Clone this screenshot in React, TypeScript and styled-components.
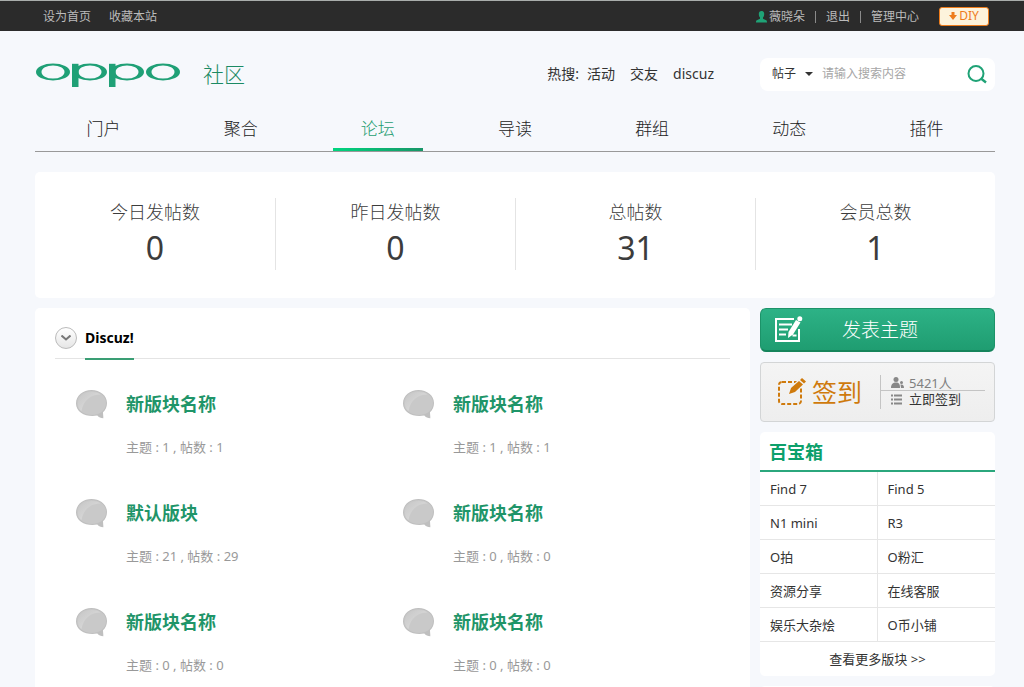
import React from 'react';
import styled, { createGlobalStyle, css } from 'styled-components';

const Global = createGlobalStyle`
  * { box-sizing: border-box; }
  body {
    margin: 0;
    background: #f6f8fc;
    color: #333;
    font: 14px/20px "Noto Sans", "Noto Sans CJK SC", sans-serif;
  }
  a { color: inherit; text-decoration: none; }
  ul, dl, dd, h1, h2, h3, p { margin: 0; padding: 0; list-style: none; }
  button, input, select { font: inherit; color: inherit; }
  button { cursor: pointer; }
`;

const gutter = css`
  padding-left: 35px;
  padding-right: 29px;
`;

const TopBar = styled.div`
  ${gutter}
  display: flex;
  justify-content: space-between;
  align-items: center;
  height: 31px;
  background: #2b2b2b;
  border-top: 1px solid #a9adab;
  color: #bbb;
  font-size: 12px;
`;
const TopLinks = styled.nav`
  display: flex;
  gap: 18px;
  padding: 2px 0 0 8px;
`;
const UserLinks = styled.div`
  display: flex;
  align-items: center;
  padding-right: 6px;
`;
const UserItems = styled.div`
  display: flex;
  align-items: center;
  padding-top: 2px;
`;
const UserName = styled.a`
  display: flex;
  align-items: center;
  gap: 2px;
`;
const Divider = styled.span`
  width: 1px;
  height: 12px;
  margin: 0 10px;
  background: #8a8a8a;
`;
const DiyButton = styled.button`
  display: flex;
  align-items: center;
  justify-content: center;
  gap: 2px;
  width: 50px;
  height: 19px;
  margin-left: 20px;
  padding: 0;
  background: #fdf3dc;
  border: 1px solid #ee7c1b;
  border-radius: 3px;
  color: #ee7c1b;
  font-size: 12px;
  line-height: 16px;
`;

const Header = styled.header`
  ${gutter}
`;
const Masthead = styled.div`
  display: flex;
  align-items: center;
  height: 86px;
`;
const Brand = styled.a`
  display: flex;
  align-items: center;
  gap: 22px;
  color: #1b8a63;
  font-size: 21px;
  font-weight: 300;
  line-height: 30px;
`;
const HotSearch = styled.div`
  display: flex;
  gap: 15px;
  margin-left: auto;
  margin-right: 46px;
`;
const HotFirst = styled.span`
  display: flex;
  gap: 8px;
`;
const SearchBox = styled.form`
  display: flex;
  align-items: center;
  width: 235px;
  height: 33px;
  padding: 0 8px 0 12px;
  background: #fff;
  border-radius: 8px;
  font-size: 12px;
`;
const ScopeWrap = styled.div`
  display: flex;
  align-items: center;
  margin-right: 9px;
`;
const Scope = styled.select`
  appearance: none;
  width: 33px;
  padding: 0;
  border: 0;
  background: transparent;
  outline: none;
`;
const SearchInput = styled.input`
  flex: 1;
  min-width: 0;
  padding: 0;
  border: 0;
  outline: none;
  background: transparent;
  &::placeholder { color: #a6a6a6; opacity: 1; }
`;
const IconButton = styled.button`
  display: flex;
  padding: 0;
  border: 0;
  background: transparent;
`;

const MainNav = styled.nav`
  display: grid;
  grid-template-columns: repeat(7, 1fr);
  height: 35px;
  border-bottom: 1px solid #999;
`;
const NavLink = styled.a<{ $active?: boolean }>`
  display: flex;
  flex-direction: column;
  align-items: center;
  justify-content: space-between;
  font-size: 17px;
  font-weight: 300;
  line-height: 24px;
  color: ${(p) => (p.$active ? '#1f9d72' : '#222')};
  ${(p) =>
    p.$active &&
    css`
      &::after {
        content: '';
        width: 90px;
        height: 3px;
        background: linear-gradient(90deg, #00d57f, #189668);
      }
    `}
`;

const Page = styled.main`
  ${gutter}
  padding-top: 20px;
`;
const Stats = styled.dl`
  display: grid;
  grid-template-columns: repeat(4, 1fr);
  height: 126px;
  padding: 26px 0 28px;
  background: #fff;
  border-radius: 5px;
`;
const Stat = styled.div`
  text-align: center;
  color: #3c3c3c;
  & + & { border-left: 1px solid #e4e4e4; }
`;
const StatLabel = styled.dt`
  font-size: 18px;
  font-weight: 300;
  line-height: 28px;
`;
const StatValue = styled.dd`
  font-size: 32px;
  line-height: 44px;
`;

const Columns = styled.div`
  display: grid;
  grid-template-columns: 1fr 235px;
  gap: 10px;
  margin-top: 10px;
`;
const Panel = styled.section`
  padding: 16px 20px 0;
  background: #fff;
  border-radius: 5px 5px 0 0;
`;
const PanelHead = styled.div`
  display: flex;
  gap: 8px;
  height: 35px;
  border-bottom: 1px solid #e4e4e4;
`;
const Toggle = styled.button`
  display: flex;
  align-items: center;
  justify-content: center;
  width: 22px;
  height: 22px;
  margin-top: 3px;
  padding: 0;
  border: 1px solid #bbb;
  border-radius: 50%;
  background: linear-gradient(#fff, #e6e6e6);
`;
const PanelTitle = styled.h2`
  height: 36px;
  border-bottom: 2px solid #3a9e74;
  color: #000;
  font-size: 14px;
  line-height: 28px;
`;
const Boards = styled.ul`
  display: grid;
  grid-template-columns: repeat(2, 1fr);
  padding: 31px 0 0 21px;
`;
const Board = styled.li`
  display: flex;
  gap: 18px;
  height: 109px;
`;
const BoardName = styled.h3`
  color: #1f9569;
  font-size: 18px;
  line-height: 28px;
`;
const BoardMeta = styled.p`
  margin-top: 19px;
  color: #999;
  font-size: 13px;
  line-height: 20px;
`;

const Sidebar = styled.aside`
  display: flex;
  flex-direction: column;
  gap: 10px;
`;
const PostButton = styled.button`
  display: flex;
  align-items: center;
  gap: 38px;
  height: 44px;
  padding: 0 13px;
  border: 1px solid #1c9369;
  border-bottom: 2px solid #15845c;
  border-radius: 6px;
  background: linear-gradient(#2db286, #1f9d71);
  color: #fff;
  font-size: 19px;
  font-weight: 300;
  line-height: 28px;
`;
const SignCard = styled.div`
  display: flex;
  align-items: center;
  height: 60px;
  padding: 0 9px 0 16px;
  border: 1px solid #d3d5d6;
  border-radius: 4px;
  background: linear-gradient(#f4f4f4, #eee);
`;
const SignTitle = styled.span`
  margin: 0 18px 0 5px;
  color: #cf7a0c;
  font-size: 25px;
  line-height: 36px;
  white-space: nowrap;
`;
const SignInfo = styled.div`
  flex: 1;
  height: 34px;
  border-left: 1px solid #c4c4c4;
  font-size: 13px;
  line-height: 16px;
`;
const SignLine = styled.div<{ $muted?: boolean }>`
  display: flex;
  align-items: center;
  gap: 5px;
  height: 16px;
  padding-left: 10px;
  color: ${(p) => (p.$muted ? '#808080' : '#333')};
  border-bottom: ${(p) => (p.$muted ? '1px solid #c4c4c4' : '0')};
`;

const Box = styled.section`
  background: #fff;
  border-radius: 5px;
  font-size: 13px;
  min-height: 40px;
`;
const BoxTitle = styled.h2`
  height: 40px;
  padding-left: 9px;
  border-bottom: 2px solid #2ba77d;
  color: #0da06b;
  font-size: 18px;
  line-height: 40px;
`;
const BoxGrid = styled.ul`
  display: grid;
  grid-template-columns: repeat(2, 1fr);
`;
const BoxItem = styled.li`
  height: 34px;
  padding-left: 10px;
  border-bottom: 1px solid #e6e6e6;
  line-height: 34px;
  &:nth-child(odd) { border-right: 1px solid #e6e6e6; }
`;
const BoxMore = styled.a`
  display: block;
  height: 34px;
  line-height: 34px;
  text-align: center;
`;

const RING = 'M0 9a17 8.500 0 1 0 34 0a17 8.500 0 1 0-34 0zM5.500 9a11.500 6.600 0 1 1 23 0a11.500 6.600 0 1 1-23 0z';

const Logo = () => (
  <svg width="146" height="26" viewBox="0 -2 146 26" fill="#1fa076" fillRule="evenodd" aria-label="OPPO">
    <path transform="translate(1 0)" d={RING} />
    <path transform="translate(38 0)" d={RING} />
    <path d="M37 .8h6.500V24H37z" />
    <path transform="translate(75 0)" d={RING} />
    <path d="M74 .8h6.500V24H74z" />
    <path transform="translate(111 0)" d={RING} />
  </svg>
);

const Bubble = () => (
  <svg width="32" height="29" viewBox="0 0 32 29">
    <defs>
      <linearGradient id="gloss" x1="0" y1="0" x2="1" y2="1">
        <stop offset="0" stopColor="#c6c6c6" />
        <stop offset="1" stopColor="#e2e2e2" />
      </linearGradient>
    </defs>
    <path d="M15.500 0C24 0 31 5.500 31 13c0 4-1.500 7-4 9.200c0 2 .5 4 .3 6c-2.500 0-4.500-1-6-2.700C11 27.500 0 23 0 13.500C0 5.500 7 0 15.500 0z" fill="#bfbfbf" />
    <path d="M15.500 1C23.500 1 30 6 30 13c0 8-7 12-14 12S1 21 1 13.500C1 6 7.500 1 15.500 1z" fill="#c9c9c9" />
    <path d="M2.500 17C0 8.500 7 2 15.500 2c4 0 7 .8 9 2.500C15 4.500 7.500 10 5.500 21C4 20 3 18.800 2.500 17z" fill="url(#gloss)" />
  </svg>
);

const boards = [
  { name: '新版块名称', topics: 1, posts: 1 },
  { name: '新版块名称', topics: 1, posts: 1 },
  { name: '默认版块', topics: 21, posts: 29 },
  { name: '新版块名称', topics: 0, posts: 0 },
  { name: '新版块名称', topics: 0, posts: 0 },
  { name: '新版块名称', topics: 0, posts: 0 },
];
const stats: [string, number][] = [
  ['今日发帖数', 0],
  ['昨日发帖数', 0],
  ['总帖数', 31],
  ['会员总数', 1],
];
const navItems = ['门户', '聚合', '论坛', '导读', '群组', '动态', '插件'];
const toolbox = ['Find 7', 'Find 5', 'N1 mini', 'R3', 'O拍', 'O粉汇', '资源分享', '在线客服', '娱乐大杂烩', 'O币小铺'];

export default function App() {
  return (
    <>
      <Global />
      <TopBar>
        <TopLinks>
          <a href="#home">设为首页</a>
          <a href="#fav">收藏本站</a>
        </TopLinks>
        <UserLinks>
          <UserItems>
            <UserName href="#user">
              <svg width="11" height="12" viewBox="0 0 11 12" fill="#1fa276">
                <path d="M5.500 0C7.300 0 8.300 1.300 8.200 3.200C8.100 5 7.500 6 7 6.600v1.200l3.200 1.500c.6.300.8 1 .8 2.200H0c0-1.200.2-1.900.8-2.200L4 7.800V6.600C3.500 6 2.900 5 2.800 3.200C2.700 1.300 3.700 0 5.500 0z" />
              </svg>
              薇晓朵
            </UserName>
            <Divider />
            <a href="#exit">退出</a>
            <Divider />
            <a href="#admin">管理中心</a>
          </UserItems>
          <DiyButton type="button">
            <svg width="8" height="8" viewBox="0 0 8 8" fill="#ee7c1b">
              <path d="M2.500 0h3v3H8L4 8L0 3h2.500z" />
            </svg>
            DIY
          </DiyButton>
        </UserLinks>
      </TopBar>

      <Header>
        <Masthead>
          <Brand href="#top">
            <Logo />
            社区
          </Brand>
          <HotSearch>
            <HotFirst>
              <span>热搜:</span>
              <a href="#activity">活动</a>
            </HotFirst>
            <a href="#friends">交友</a>
            <a href="#discuz">discuz</a>
          </HotSearch>
          <SearchBox onSubmit={(e) => e.preventDefault()}>
            <ScopeWrap>
              <Scope aria-label="搜索范围">
                <option>帖子</option>
              </Scope>
              <svg width="8" height="4" viewBox="0 0 8 4" fill="#333">
                <path d="M0 0h8L4 4z" />
              </svg>
            </ScopeWrap>
            <SearchInput aria-label="搜索内容" placeholder="请输入搜索内容" />
            <IconButton type="submit" aria-label="搜索">
              <svg width="20" height="20" viewBox="0 0 20 20" fill="none" stroke="#1fa276" strokeWidth="2">
                <circle cx="9" cy="9.500" r="7.500" />
                <path d="M14 14.500l5 4" strokeWidth="2.500" />
              </svg>
            </IconButton>
          </SearchBox>
        </Masthead>
        <MainNav>
          {navItems.map((item) => (
            <NavLink key={item} href="#nav" $active={item === '论坛'}>
              {item}
            </NavLink>
          ))}
        </MainNav>
      </Header>

      <Page>
        <Stats>
          {stats.map(([label, value]) => (
            <Stat key={label}>
              <StatLabel>{label}</StatLabel>
              <StatValue>{value}</StatValue>
            </Stat>
          ))}
        </Stats>

        <Columns>
          <Panel>
            <PanelHead>
              <Toggle type="button" aria-label="收起">
                <svg width="10" height="6" viewBox="0 0 10 6" fill="none" stroke="#777" strokeWidth="2">
                  <path d="M.5.5L5 4.500L9.500.5" />
                </svg>
              </Toggle>
              <PanelTitle>Discuz!</PanelTitle>
            </PanelHead>
            <Boards>
              {boards.map((board, i) => (
                <Board key={i}>
                  <Bubble />
                  <div>
                    <BoardName>
                      <a href="#board">{board.name}</a>
                    </BoardName>
                    <BoardMeta>
                      主题 : {board.topics} , 帖数 : {board.posts}
                    </BoardMeta>
                  </div>
                </Board>
              ))}
            </Boards>
          </Panel>

          <Sidebar>
            <PostButton type="button">
              <svg width="30" height="28" viewBox="0 0 30 28" fill="none" stroke="#fff" strokeWidth="2">
                <path d="M20 3H2v22h23V13" />
                <path d="M5 8.500h13M5 13.500h9M5 18.500h7" />
                <path d="M22 4l4.500 2.500L19 18.500L14 22l.5-6z" fill="#fff" stroke="none" />
                <circle cx="25.800" cy="2.800" r="2.500" fill="#fff" stroke="none" />
                <path d="M18.500 19.500h4" />
              </svg>
              发表主题
            </PostButton>

            <SignCard>
              <svg width="30" height="28" viewBox="0 0 30 28" fill="none" stroke="#cf7a0c">
                <rect x="2" y="4" width="22" height="22" rx="3" strokeWidth="2" strokeDasharray="4 2" />
                <path d="M10 18l3-8L23 0l6 5L18 15z" fill="#f2f2f2" stroke="none" />
                <path d="M12 16l2-6l8-7l4 3.500l-8 7.500z" fill="#cf7a0c" stroke="none" />
                <path d="M23 2l2-2l4 3.500L27 5.500z" fill="#cf7a0c" stroke="none" />
              </svg>
              <SignTitle>签到</SignTitle>
              <SignInfo>
                <SignLine $muted>
                  <svg width="13" height="12" viewBox="0 0 13 12" fill="#888">
                    <circle cx="5" cy="2.500" r="2.500" />
                    <path d="M0 11C0 7 2 5.500 5 5.500S9 7 9 11z" />
                    <circle cx="10.500" cy="5.500" r="1.500" />
                    <path d="M9.500 7.500C12 7 13 8.500 13 11h-3z" />
                  </svg>
                  5421人
                </SignLine>
                <SignLine>
                  <svg width="13" height="11" viewBox="0 0 13 11" stroke="#888" strokeWidth="2">
                    <path d="M0 1.500h2M0 5.500h2M0 9.500h2M3 1.500h8M3 5.500h8M3 9.500h8" />
                  </svg>
                  <a href="#sign">立即签到</a>
                </SignLine>
              </SignInfo>
            </SignCard>

            <Box>
              <BoxTitle>百宝箱</BoxTitle>
              <BoxGrid>
                {toolbox.map((item) => (
                  <BoxItem key={item}>
                    <a href="#box">{item}</a>
                  </BoxItem>
                ))}
              </BoxGrid>
              <BoxMore href="#more">查看更多版块 &gt;&gt;</BoxMore>
            </Box>
            <Box />
          </Sidebar>
        </Columns>
      </Page>
    </>
  );
}
